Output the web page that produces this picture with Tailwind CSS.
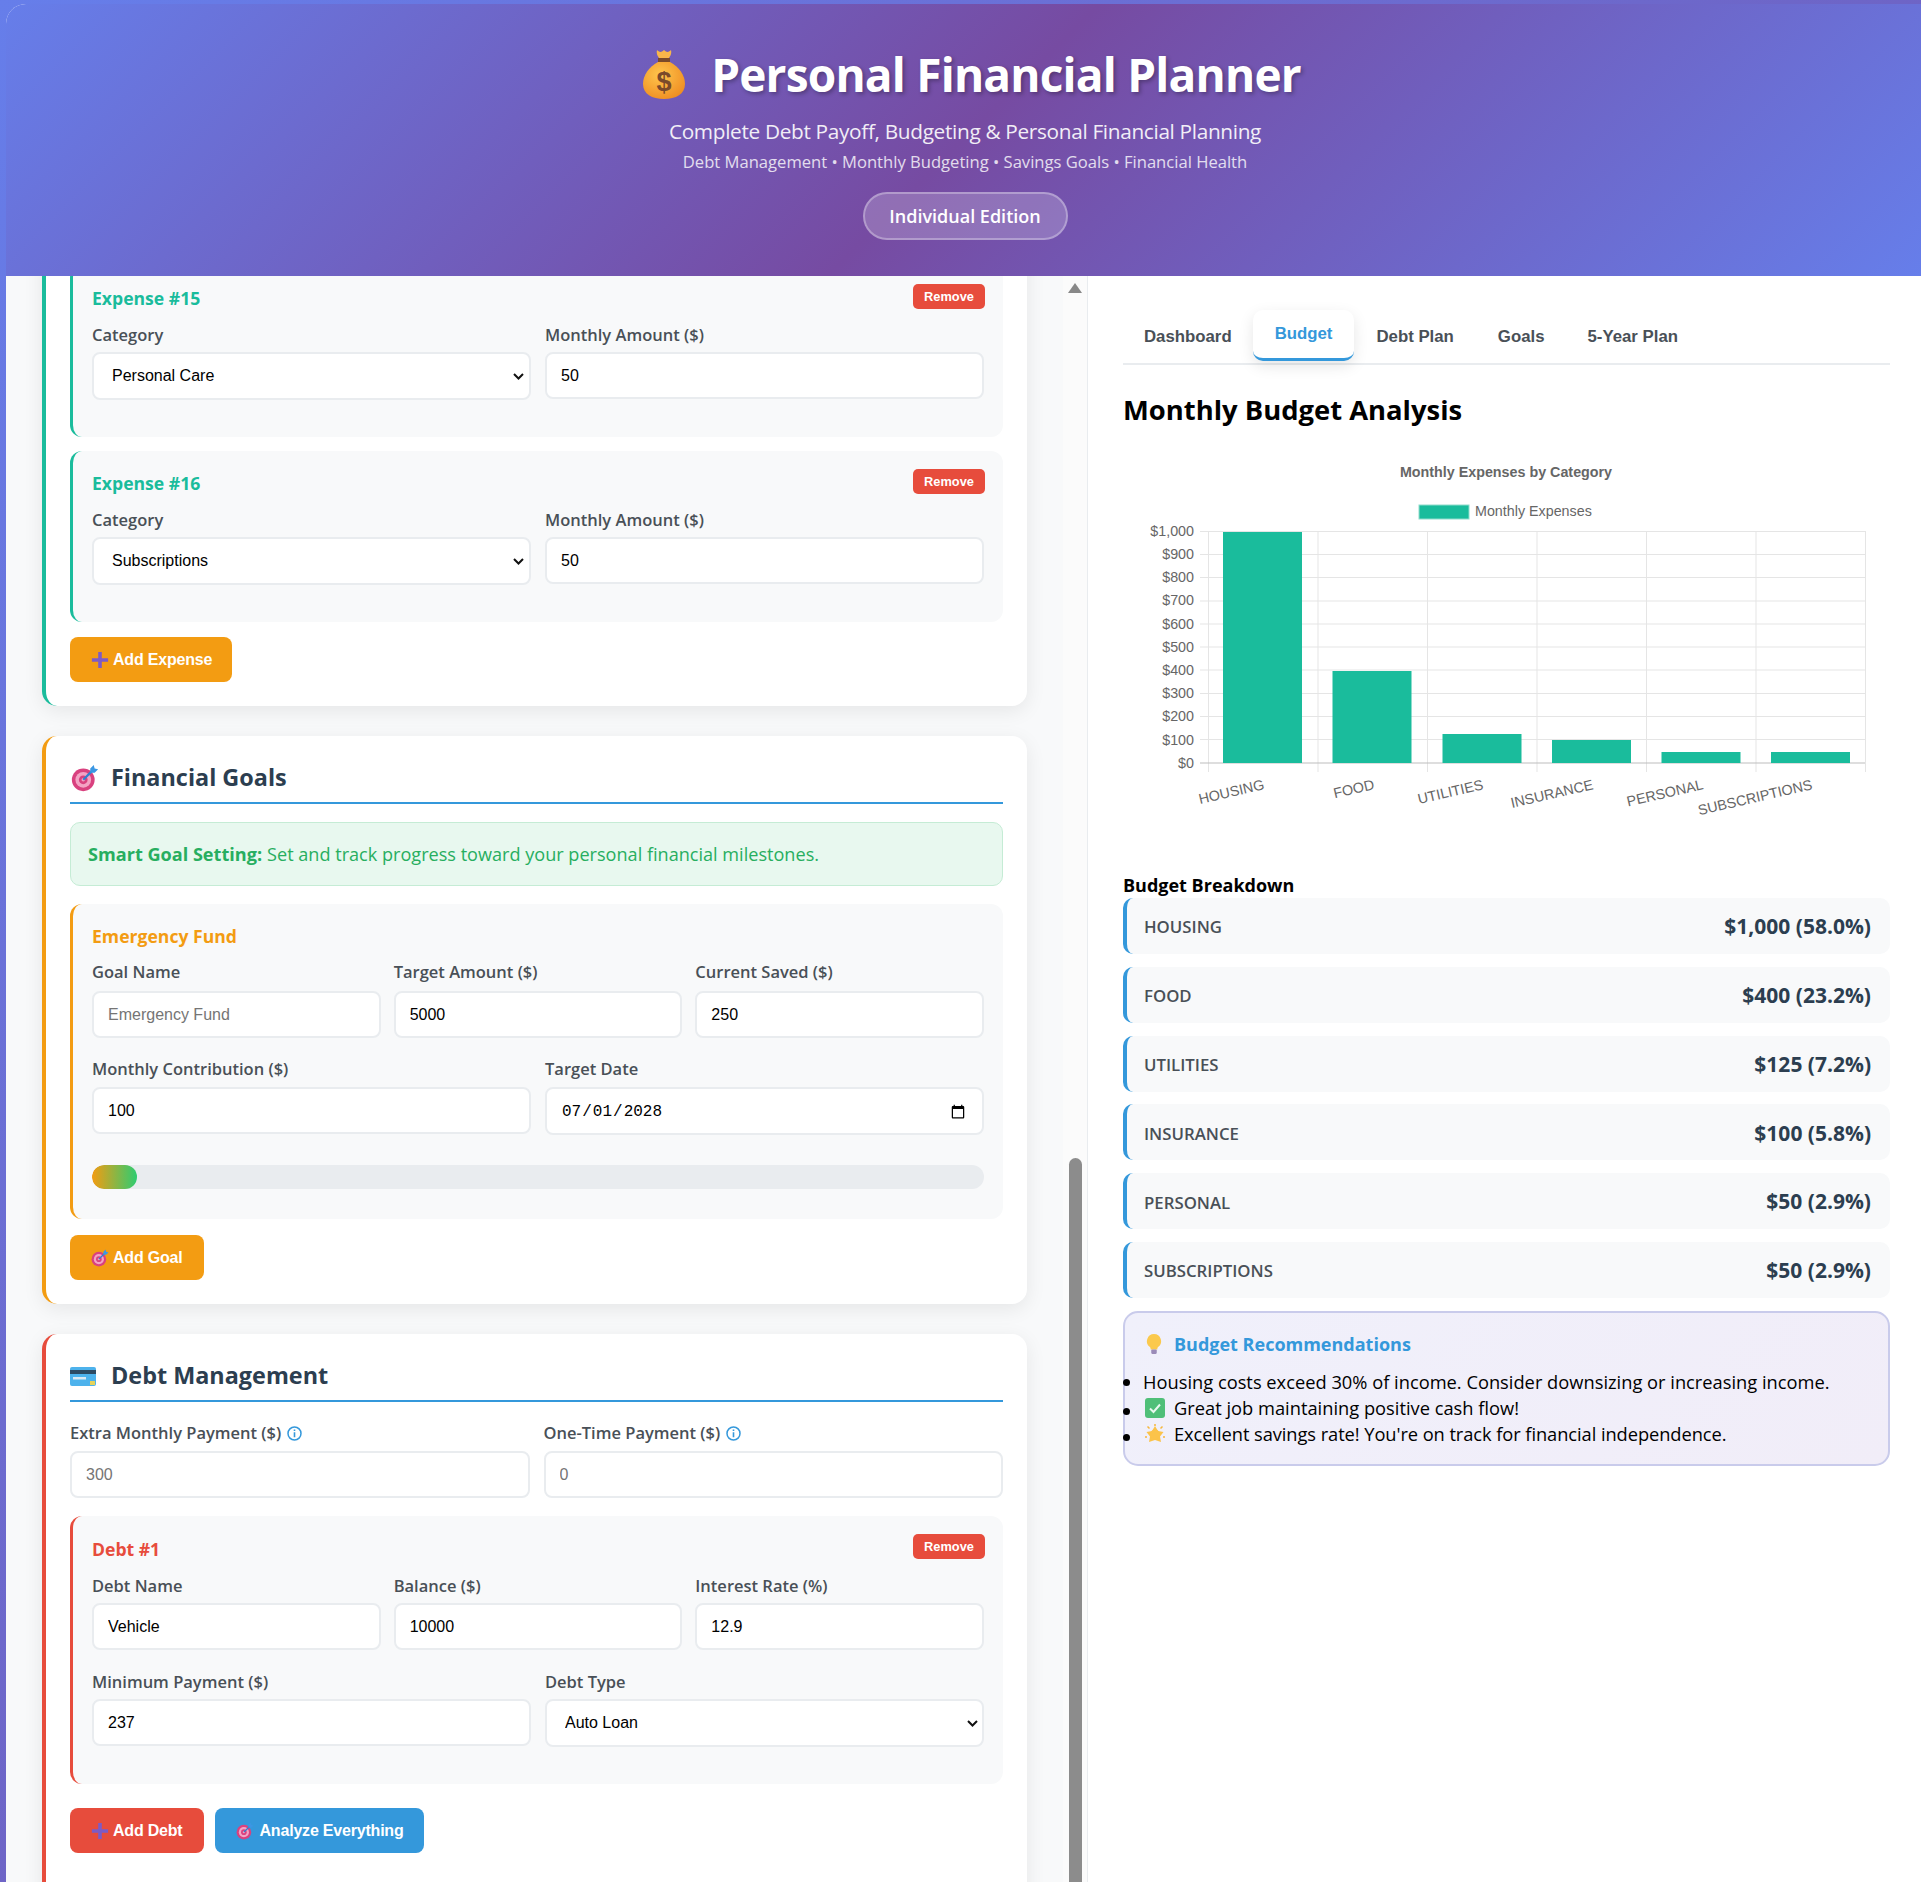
<!DOCTYPE html>
<html lang="en">
<head>
    <meta charset="UTF-8">
    <meta name="viewport" content="width=device-width, initial-scale=1.0">
    <title>Personal Financial Planner</title>
    <script src="https://cdn.jsdelivr.net/npm/@tailwindcss/browser@4"></script>
</head>
<body class="h-[1882px] overflow-hidden bg-[linear-gradient(135deg,#667eea,#764ba2)] pl-[6px] pt-[4px] [font-family:'Open_Sans',sans-serif]">

<!-- emoji sprites -->
<svg class="absolute h-0 w-0">
    <defs>
        <radialGradient id="bagFill" cx="40%" cy="35%" r="75%"><stop offset="0" stop-color="#ffc64d"/><stop offset="1" stop-color="#ee8a1f"/></radialGradient>
        <symbol id="target" viewBox="0 0 32 32">
            <circle cx="14" cy="18" r="13" fill="#d9417f"/>
            <circle cx="14" cy="18" r="9" fill="#f3a3c4"/>
            <circle cx="14" cy="18" r="5" fill="#d9417f"/>
            <circle cx="14" cy="18" r="2" fill="#f3a3c4"/>
            <path d="M14 18 25 7" stroke="#2f7fd0" stroke-width="2.5"/>
            <path d="M22 5 26 1 27 5 31 6 27 10 22 10Z" fill="#3b97e3"/>
        </symbol>
        <symbol id="plus" viewBox="0 0 20 20">
            <path d="M8 1h4v7h7v4h-7v7H8v-7H1V8h7Z" fill="#7d5bc6"/>
        </symbol>
        <symbol id="chevron" viewBox="0 0 11 7">
            <path d="M1 1l4.500 4.500L10 1" fill="none" stroke="#111" stroke-width="2"/>
        </symbol>
    </defs>
</svg>

<div class="w-full overflow-hidden rounded-tl-[20px] bg-white">
    <!-- header -->
    <header class="h-[272px] bg-[linear-gradient(135deg,#667eea_0%,#764ba2_50%,#667eea_100%)] pl-[3px] text-center text-white">
        <div class="flex items-center justify-center gap-[25px] pl-[13px] pt-[35px]">
            <svg class="h-[50px] w-[44px]" viewBox="0 0 44 50">
                <path d="M15 1c2 2 4 3 7 0 3 3 5 2 7 0 1 4-1 7-3 9h-8c-2-2-4-5-3-9Z" fill="#f9b64a"/>
                <rect x="16" y="9" width="12" height="4" fill="#7a4a2a"/>
                <path d="M16 13h12c9 5 15 13 15 22 0 10-9 15-21 15S1 45 1 35c0-9 6-17 15-22Z" fill="url(#bagFill)"/>
                <text x="22" y="42" text-anchor="middle" font-size="27" font-weight="700" fill="#7a4a2a" font-family="Liberation Sans">$</text>
            </svg>
            <h1 class="text-[46px] leading-[70px] font-bold tracking-[-0.8px] [text-shadow:2px_2px_4px_rgba(0,0,0,0.3)]">Personal Financial Planner</h1>
        </div>
        <p class="mt-[8px] text-[20.8px] leading-[28px] tracking-[-0.33px] opacity-90">Complete Debt Payoff, Budgeting &amp; Personal Financial Planning</p>
        <p class="mt-[6px] text-[16.6px] leading-[22px] opacity-80">Debt Management • Monthly Budgeting • Savings Goals • Financial Health</p>
        <div class="mt-[19px] inline-flex h-[48px] w-[205px] items-center justify-center rounded-[25px] border-2 border-white/30 bg-white/20 text-[18px] font-semibold">Individual Edition</div>
    </header>

    <main class="flex h-[1606px] bg-white">
        <!-- left panel, scrolled part way down -->
        <section class="h-full w-[1057px] overflow-hidden bg-[#f8f9fa] pl-[36px] pr-[36px]">
            <!-- expenses -->
            <div class="-mt-[40px] rounded-[15px] border-l-4 border-[#1abc9c] bg-white pb-[24px] pl-[24px] pr-[24px] pt-[30px] shadow-[0_5px_20px_rgba(0,0,0,0.08)]">
                <div class="mb-[14px] h-[171px] rounded-[12px] border-l-[3px] border-[#1abc9c] bg-[#f8f9fa] pl-[19px] pr-[19px] pt-[18px]">
                    <div class="flex h-[25px] items-center justify-between">
                        <h4 class="pt-[3px] text-[17.6px] font-bold text-[#1abc9c]">Expense #15</h4>
                        <button class="-mr-[1px] h-[25px] w-[72px] rounded-[5px] bg-[#e74c3c] text-[12.8px] font-bold text-white [font-family:'Liberation_Sans',sans-serif]">Remove</button>
                    </div>
                    <div class="mt-[15px] grid grid-cols-2 gap-[14px]">
                        <div>
                            <label class="mb-[6px] block h-[22px] text-[16.5px] leading-[22px] font-semibold text-[#495057]">Category</label>
                            <div class="relative">
                                <select class="h-[48px] w-full appearance-none rounded-[8px] border-2 border-[#e9ecef] bg-white px-[18px] text-[16px] text-black [font-family:'Liberation_Sans',sans-serif]"><option>Personal Care</option></select>
                                <svg class="pointer-events-none absolute right-[7px] top-[21px] h-[7px] w-[11px]"><use href="#chevron"/></svg>
                            </div>
                        </div>
                        <div>
                            <label class="mb-[6px] block h-[22px] text-[16.5px] leading-[22px] font-semibold text-[#495057]">Monthly Amount ($)</label>
                            <input type="number" value="50" class="h-[47px] w-full rounded-[8px] border-2 border-[#e9ecef] bg-white px-[14px] text-[16px] text-black [font-family:'Liberation_Sans',sans-serif]">
                        </div>
                    </div>
                </div>
                <div class="mb-[15px] h-[171px] rounded-[12px] border-l-[3px] border-[#1abc9c] bg-[#f8f9fa] pl-[19px] pr-[19px] pt-[18px]">
                    <div class="flex h-[25px] items-center justify-between">
                        <h4 class="pt-[3px] text-[17.6px] font-bold text-[#1abc9c]">Expense #16</h4>
                        <button class="-mr-[1px] h-[25px] w-[72px] rounded-[5px] bg-[#e74c3c] text-[12.8px] font-bold text-white [font-family:'Liberation_Sans',sans-serif]">Remove</button>
                    </div>
                    <div class="mt-[15px] grid grid-cols-2 gap-[14px]">
                        <div>
                            <label class="mb-[6px] block h-[22px] text-[16.5px] leading-[22px] font-semibold text-[#495057]">Category</label>
                            <div class="relative">
                                <select class="h-[48px] w-full appearance-none rounded-[8px] border-2 border-[#e9ecef] bg-white px-[18px] text-[16px] text-black [font-family:'Liberation_Sans',sans-serif]"><option>Subscriptions</option></select>
                                <svg class="pointer-events-none absolute right-[7px] top-[21px] h-[7px] w-[11px]"><use href="#chevron"/></svg>
                            </div>
                        </div>
                        <div>
                            <label class="mb-[6px] block h-[22px] text-[16.5px] leading-[22px] font-semibold text-[#495057]">Monthly Amount ($)</label>
                            <input type="number" value="50" class="h-[47px] w-full rounded-[8px] border-2 border-[#e9ecef] bg-white px-[14px] text-[16px] text-black [font-family:'Liberation_Sans',sans-serif]">
                        </div>
                    </div>
                </div>
                <button class="flex h-[45px] items-center gap-[4px] rounded-[8px] bg-[#f39c12] pl-[21px] pr-[20px] text-[16px] font-bold tracking-[-0.2px] text-white [font-family:'Liberation_Sans',sans-serif]">
                    <svg class="h-[18px] w-[18px]"><use href="#plus"/></svg>Add Expense
                </button>
            </div>

            <!-- goals -->
            <div class="mt-[30px] rounded-[15px] border-l-4 border-[#f39c12] bg-white p-[24px] shadow-[0_5px_20px_rgba(0,0,0,0.08)]">
                <h3 class="flex h-[44px] items-start gap-[11px] border-b-2 border-[#3498db] text-[23.4px] leading-[34px] font-bold text-[#2c3e50]">
                    <svg class="mt-[4px] h-[28px] w-[30px]"><use href="#target"/></svg>Financial Goals
                </h3>
                <div class="mt-[18px] flex h-[64px] items-center rounded-[10px] border border-[#c5ecd5] bg-[#e8f8ef] pl-[17px] pt-[2px] text-[18.1px] text-[#27ae60]"><strong class="mr-[5px] font-bold">Smart Goal Setting:</strong> Set and track progress toward your personal financial milestones.</div>
                <div class="mt-[18px] h-[315px] rounded-[12px] border-l-[3px] border-[#f39c12] bg-[#f8f9fa] pl-[19px] pr-[19px] pt-[19px]">
                    <h4 class="h-[25px] text-[17.6px] font-bold text-[#f39c12]">Emergency Fund</h4>
                    <div class="mt-[13px] grid grid-cols-3 gap-[13px]">
                        <div>
                            <label class="mb-[8px] block h-[22px] text-[16.5px] leading-[22px] font-semibold text-[#495057]">Goal Name</label>
                            <input type="text" placeholder="Emergency Fund" class="h-[47px] w-full rounded-[8px] border-2 border-[#e9ecef] bg-white px-[14px] text-[16px] text-black placeholder:text-[#757575] [font-family:'Liberation_Sans',sans-serif]">
                        </div>
                        <div>
                            <label class="mb-[8px] block h-[22px] text-[16.5px] leading-[22px] font-semibold text-[#495057]">Target Amount ($)</label>
                            <input type="number" value="5000" class="h-[47px] w-full rounded-[8px] border-2 border-[#e9ecef] bg-white px-[14px] text-[16px] text-black [font-family:'Liberation_Sans',sans-serif]">
                        </div>
                        <div>
                            <label class="mb-[8px] block h-[22px] text-[16.5px] leading-[22px] font-semibold text-[#495057]">Current Saved ($)</label>
                            <input type="number" value="250" class="h-[47px] w-full rounded-[8px] border-2 border-[#e9ecef] bg-white px-[14px] text-[16px] text-black [font-family:'Liberation_Sans',sans-serif]">
                        </div>
                    </div>
                    <div class="mt-[20px] grid grid-cols-2 gap-[14px]">
                        <div>
                            <label class="mb-[7px] block h-[22px] text-[16.5px] leading-[22px] font-semibold text-[#495057]">Monthly Contribution ($)</label>
                            <input type="number" value="100" class="h-[47px] w-full rounded-[8px] border-2 border-[#e9ecef] bg-white px-[14px] text-[16px] text-black [font-family:'Liberation_Sans',sans-serif]">
                        </div>
                        <div>
                            <label class="mb-[7px] block h-[22px] text-[16.5px] leading-[22px] font-semibold text-[#495057]">Target Date</label>
                            <input type="date" value="2028-07-01" class="h-[48px] w-full rounded-[8px] border-2 border-[#e9ecef] bg-white px-[14px] pt-[1px] text-[16px] text-black [font-family:'Liberation_Mono',monospace]">
                        </div>
                    </div>
                    <div class="mt-[30px] h-[24px] overflow-hidden rounded-[12px] bg-[#e9ecef]">
                        <div class="h-full w-[5%] rounded-[12px] bg-[linear-gradient(90deg,#f39c12,#2ecc71)]"></div>
                    </div>
                </div>
                <button class="mt-[16px] flex h-[45px] items-center gap-[4px] rounded-[8px] bg-[#f39c12] pl-[21px] pr-[21px] text-[16px] font-bold tracking-[-0.2px] text-white [font-family:'Liberation_Sans',sans-serif]">
                    <svg class="h-[18px] w-[18px]"><use href="#target"/></svg>Add Goal
                </button>
            </div>

            <!-- debts -->
            <div class="mt-[30px] rounded-[15px] border-l-4 border-[#e74c3c] bg-white px-[24px] pb-[80px] pt-[24px] shadow-[0_5px_20px_rgba(0,0,0,0.08)]">
                <h3 class="flex h-[44px] items-start gap-[11px] border-b-2 border-[#3498db] text-[23.4px] leading-[34px] font-bold text-[#2c3e50]">
                    <svg class="mt-[9px] h-[20px] w-[30px]" viewBox="0 0 30 20">
                        <rect y="0" width="26" height="19" rx="2" fill="#4db2ec"/>
                        <rect y="3" width="26" height="4" fill="#2c4a63"/>
                        <rect x="3" y="10" width="13" height="2.5" fill="#dce9f2"/>
                        <rect x="20" y="14" width="5" height="4" fill="#e6d35a"/>
                    </svg>Debt Management
                </h3>
                <div class="mt-[20px] grid grid-cols-2 gap-[14px]">
                    <div>
                        <label class="mb-[7px] flex h-[22px] items-center gap-[6px] text-[16.5px] leading-[22px] font-semibold text-[#495057]">Extra Monthly Payment ($)
                            <svg class="h-[15px] w-[15px]" viewBox="0 0 15 15"><circle cx="7.5" cy="7.5" r="6.5" fill="none" stroke="#3498db" stroke-width="1.5"/><path d="M7.5 6.3v5M7.5 3.6v1.4" stroke="#3498db" stroke-width="1.6"/></svg>
                        </label>
                        <input type="number" placeholder="300" class="h-[47px] w-full rounded-[8px] border-2 border-[#e9ecef] bg-white px-[14px] text-[16px] placeholder:text-[#757575] [font-family:'Liberation_Sans',sans-serif]">
                    </div>
                    <div>
                        <label class="mb-[7px] flex h-[22px] items-center gap-[6px] text-[16.5px] leading-[22px] font-semibold text-[#495057]">One-Time Payment ($)
                            <svg class="h-[15px] w-[15px]" viewBox="0 0 15 15"><circle cx="7.5" cy="7.5" r="6.5" fill="none" stroke="#3498db" stroke-width="1.5"/><path d="M7.5 6.3v5M7.5 3.6v1.4" stroke="#3498db" stroke-width="1.6"/></svg>
                        </label>
                        <input type="number" placeholder="0" class="h-[47px] w-full rounded-[8px] border-2 border-[#e9ecef] bg-white px-[14px] text-[16px] placeholder:text-[#757575] [font-family:'Liberation_Sans',sans-serif]">
                    </div>
                </div>
                <div class="mt-[18px] h-[268px] rounded-[12px] border-l-[3px] border-[#e74c3c] bg-[#f8f9fa] pl-[19px] pr-[19px] pt-[18px]">
                    <div class="flex h-[25px] items-center justify-between">
                        <h4 class="pt-[5px] text-[17.6px] font-bold text-[#e74c3c]">Debt #1</h4>
                        <button class="-mr-[1px] h-[25px] w-[72px] rounded-[5px] bg-[#e74c3c] text-[12.8px] font-bold text-white [font-family:'Liberation_Sans',sans-serif]">Remove</button>
                    </div>
                    <div class="mt-[16px] grid grid-cols-3 gap-[13px]">
                        <div>
                            <label class="mb-[6px] block h-[22px] text-[16.5px] leading-[22px] font-semibold text-[#495057]">Debt Name</label>
                            <input type="text" value="Vehicle" class="h-[47px] w-full rounded-[8px] border-2 border-[#e9ecef] bg-white px-[14px] text-[16px] text-black [font-family:'Liberation_Sans',sans-serif]">
                        </div>
                        <div>
                            <label class="mb-[6px] block h-[22px] text-[16.5px] leading-[22px] font-semibold text-[#495057]">Balance ($)</label>
                            <input type="number" value="10000" class="h-[47px] w-full rounded-[8px] border-2 border-[#e9ecef] bg-white px-[14px] text-[16px] text-black [font-family:'Liberation_Sans',sans-serif]">
                        </div>
                        <div>
                            <label class="mb-[6px] block h-[22px] text-[16.5px] leading-[22px] font-semibold text-[#495057]">Interest Rate (%)</label>
                            <input type="number" value="12.9" class="h-[47px] w-full rounded-[8px] border-2 border-[#e9ecef] bg-white px-[14px] text-[16px] text-black [font-family:'Liberation_Sans',sans-serif]">
                        </div>
                    </div>
                    <div class="mt-[21px] grid grid-cols-2 gap-[14px]">
                        <div>
                            <label class="mb-[6px] block h-[22px] text-[16.5px] leading-[22px] font-semibold text-[#495057]">Minimum Payment ($)</label>
                            <input type="number" value="237" class="h-[47px] w-full rounded-[8px] border-2 border-[#e9ecef] bg-white px-[14px] text-[16px] text-black [font-family:'Liberation_Sans',sans-serif]">
                        </div>
                        <div>
                            <label class="mb-[6px] block h-[22px] text-[16.5px] leading-[22px] font-semibold text-[#495057]">Debt Type</label>
                            <div class="relative">
                                <select class="h-[48px] w-full appearance-none rounded-[8px] border-2 border-[#e9ecef] bg-white px-[18px] text-[16px] text-black [font-family:'Liberation_Sans',sans-serif]"><option>Auto Loan</option></select>
                                <svg class="pointer-events-none absolute right-[6px] top-[21px] h-[7px] w-[11px]"><use href="#chevron"/></svg>
                            </div>
                        </div>
                    </div>
                </div>
                <div class="mt-[24px] flex gap-[11px]">
                    <button class="flex h-[45px] items-center gap-[4px] rounded-[8px] bg-[#e74c3c] pl-[21px] pr-[21px] text-[16px] font-bold tracking-[-0.2px] text-white [font-family:'Liberation_Sans',sans-serif]">
                        <svg class="h-[18px] w-[18px]"><use href="#plus"/></svg>Add Debt
                    </button>
                    <button class="flex h-[45px] items-center gap-[6px] rounded-[8px] bg-[#3498db] pl-[21px] pr-[20px] text-[16px] font-bold tracking-[-0.2px] text-white [font-family:'Liberation_Sans',sans-serif]">
                        <svg class="h-[18px] w-[18px]"><use href="#target"/></svg>Analyze Everything
                    </button>
                </div>
            </div>
        </section>

        <!-- scrollbar of the left panel -->
        <div class="flex w-[24px] flex-col items-center bg-[#fbfbfb]">
            <div class="mt-[7px] h-0 w-0 border-x-[7px] border-b-[10px] border-x-transparent border-b-[#888]"></div>
            <div class="mt-[865px] w-[13px] flex-1 rounded-t-[7px] bg-[#8c8c8c]"></div>
        </div>

        <!-- right panel -->
        <section class="h-full w-[834px] border-l border-[#e9ecef] bg-white pl-[35px] pr-[31px] pt-[36px]">
            <nav class="flex h-[53px] items-start border-b-2 border-[#e9ecef] pl-0 text-[16.8px] font-bold text-[#495057] [font-family:'Liberation_Sans',sans-serif]">
                <button class="h-[51px] px-[21px] pb-[2px]">Dashboard</button>
                <button class="h-[51px] -translate-y-[2px] rounded-[10px] border-b-[3px] border-[#3498db] bg-white px-[22px] text-[#3498db] shadow-[0_5px_15px_rgba(0,0,0,0.1)]">Budget</button>
                <button class="h-[51px] px-[22px] pb-[2px]">Debt Plan</button>
                <button class="h-[51px] px-[22px] pb-[2px]">Goals</button>
                <button class="h-[51px] pl-[21px] pr-[22px] pb-[2px]">5-Year Plan</button>
            </nav>
            <h2 class="mt-[25px] text-[27.4px] leading-[40px] font-bold text-black">Monthly Budget Analysis</h2>

            <svg class="mt-[20px] block h-[422px] w-[767px]" viewBox="1124 450 767 422" font-family="Liberation Sans" font-size="14.3" fill="#666">
                <text x="1507" y="477" text-anchor="middle" font-weight="700">Monthly Expenses by Category</text>
                <rect x="1420" y="505" width="50" height="14" fill="#1abc9c" stroke="#8fdccc"/>
                <text x="1476" y="516">Monthly Expenses</text>
                <g stroke="#e5e5e5" stroke-width="1">
                    <path d="M1201 531.5H1866M1201 554.5H1866M1201 577.5H1866M1201 601H1866M1201 624H1866M1201 647H1866M1201 670H1866M1201 693.5H1866M1201 716.5H1866M1201 739.5H1866"/>
                    <path d="M1209.5 531V772M1319 531V772M1428.5 531V772M1538 531V772M1647.5 531V772M1757 531V772M1866.5 531V772"/>
                </g>
                <path d="M1201 763H1866" stroke="#bdbdbd"/>
                <g fill="#1abc9c">
                    <rect x="1224" y="532" width="79" height="231"/>
                    <rect x="1333.500" y="671" width="79" height="92"/>
                    <rect x="1443.500" y="734" width="79" height="29"/>
                    <rect x="1553" y="740" width="79" height="23"/>
                    <rect x="1662.500" y="752" width="79" height="11"/>
                    <rect x="1772" y="752" width="79" height="11"/>
                </g>
                <g text-anchor="end">
                    <text x="1195" y="536">$1,000</text><text x="1195" y="559">$900</text><text x="1195" y="582">$800</text>
                    <text x="1195" y="605">$700</text><text x="1195" y="629">$600</text><text x="1195" y="652">$500</text>
                    <text x="1195" y="675">$400</text><text x="1195" y="698">$300</text><text x="1195" y="721">$200</text>
                    <text x="1195" y="745">$100</text><text x="1195" y="768">$0</text>
                    <text transform="translate(1266 789) rotate(-13)">HOUSING</text>
                    <text transform="translate(1376 789) rotate(-13)">FOOD</text>
                    <text transform="translate(1485 789) rotate(-13)">UTILITIES</text>
                    <text transform="translate(1595 789) rotate(-13)">INSURANCE</text>
                    <text transform="translate(1705 789) rotate(-13)">PERSONAL</text>
                    <text transform="translate(1814 789) rotate(-13)">SUBSCRIPTIONS</text>
                </g>
            </svg>

            <h3 class="h-[26px] text-[18px] leading-[26px] font-bold text-black">Budget Breakdown</h3>
            <div class="flex flex-col gap-[12.8px]">
                <div class="flex h-[56px] items-center justify-between rounded-[10px] border-l-4 border-[#3498db] bg-[#f8f9fa] pl-[17px] pr-[19px] pt-[2px]"><span class="text-[16.8px] font-semibold text-[#495057]">HOUSING</span><span class="text-[21px] font-bold text-[#2c3e50]">$1,000 (58.0%)</span></div>
                <div class="flex h-[56px] items-center justify-between rounded-[10px] border-l-4 border-[#3498db] bg-[#f8f9fa] pl-[17px] pr-[19px] pt-[2px]"><span class="text-[16.8px] font-semibold text-[#495057]">FOOD</span><span class="text-[21px] font-bold text-[#2c3e50]">$400 (23.2%)</span></div>
                <div class="flex h-[56px] items-center justify-between rounded-[10px] border-l-4 border-[#3498db] bg-[#f8f9fa] pl-[17px] pr-[19px] pt-[2px]"><span class="text-[16.8px] font-semibold text-[#495057]">UTILITIES</span><span class="text-[21px] font-bold text-[#2c3e50]">$125 (7.2%)</span></div>
                <div class="flex h-[56px] items-center justify-between rounded-[10px] border-l-4 border-[#3498db] bg-[#f8f9fa] pl-[17px] pr-[19px] pt-[2px]"><span class="text-[16.8px] font-semibold text-[#495057]">INSURANCE</span><span class="text-[21px] font-bold text-[#2c3e50]">$100 (5.8%)</span></div>
                <div class="flex h-[56px] items-center justify-between rounded-[10px] border-l-4 border-[#3498db] bg-[#f8f9fa] pl-[17px] pr-[19px] pt-[2px]"><span class="text-[16.8px] font-semibold text-[#495057]">PERSONAL</span><span class="text-[21px] font-bold text-[#2c3e50]">$50 (2.9%)</span></div>
                <div class="flex h-[56px] items-center justify-between rounded-[10px] border-l-4 border-[#3498db] bg-[#f8f9fa] pl-[17px] pr-[19px] pt-[2px]"><span class="text-[16.8px] font-semibold text-[#495057]">SUBSCRIPTIONS</span><span class="text-[21px] font-bold text-[#2c3e50]">$50 (2.9%)</span></div>
            </div>

            <div class="mt-[13px] h-[155px] rounded-[15px] border-2 border-[#c9cbeb] bg-[linear-gradient(135deg,#f0f0fb,#f1edf8)] px-[20px] pt-[19px]">
                <h4 class="flex items-center gap-[11px] text-[18px] leading-[24px] font-bold text-[#3498db]">
                    <svg class="h-[22px] w-[18px]" viewBox="0 0 15 20"><path d="M7.5 1a6.5 6.5 0 0 1 4 11.6c-.8.7-1 1.6-1 2.4h-6c0-.8-.2-1.700-1-2.400A6.500 6.500 0 0 1 7.500 1Z" fill="#fbc94d"/><rect x="5" y="15" width="5" height="4" rx="1" fill="#9b8bb8"/></svg>
                    Budget Recommendations
                </h4>
                <ul class="mt-[13px] -ml-[2px] list-disc text-[18.3px] leading-[26px] text-black">
                    <li>Housing costs exceed 30% of income. Consider downsizing or increasing income.</li>
                    <li><span class="flex items-center gap-[9px]"><svg class="ml-[2px] h-[20px] w-[20px]" viewBox="0 0 20 20"><rect width="20" height="20" rx="3" fill="#4fbf78"/><path d="M5 10.500 8.500 14 15 6.500" fill="none" stroke="#e8f8ef" stroke-width="2"/></svg>Great job maintaining positive cash flow!</span></li>
                    <li><span class="flex items-center gap-[9px] tracking-[-0.07px]"><svg class="ml-[2px] h-[20px] w-[20px]" viewBox="0 0 20 20"><path d="M10 2 13 7 18.500 8 15 12.500 16 18 10 16 4 18 5 12.500 1.500 8 7 7Z" fill="#fbc34a"/><circle cx="10" cy="10.500" r="5" fill="#fbc34a"/><path d="M10 0v2M2.500 2.500l2 2M17.500 2.500l-2 2M0 13h2M18 13h2" stroke="#f6b73c" stroke-width="1.500"/></svg>Excellent savings rate! You're on track for financial independence.</span></li>
                </ul>
            </div>
        </section>
    </main>
</div>
</body>
</html>
